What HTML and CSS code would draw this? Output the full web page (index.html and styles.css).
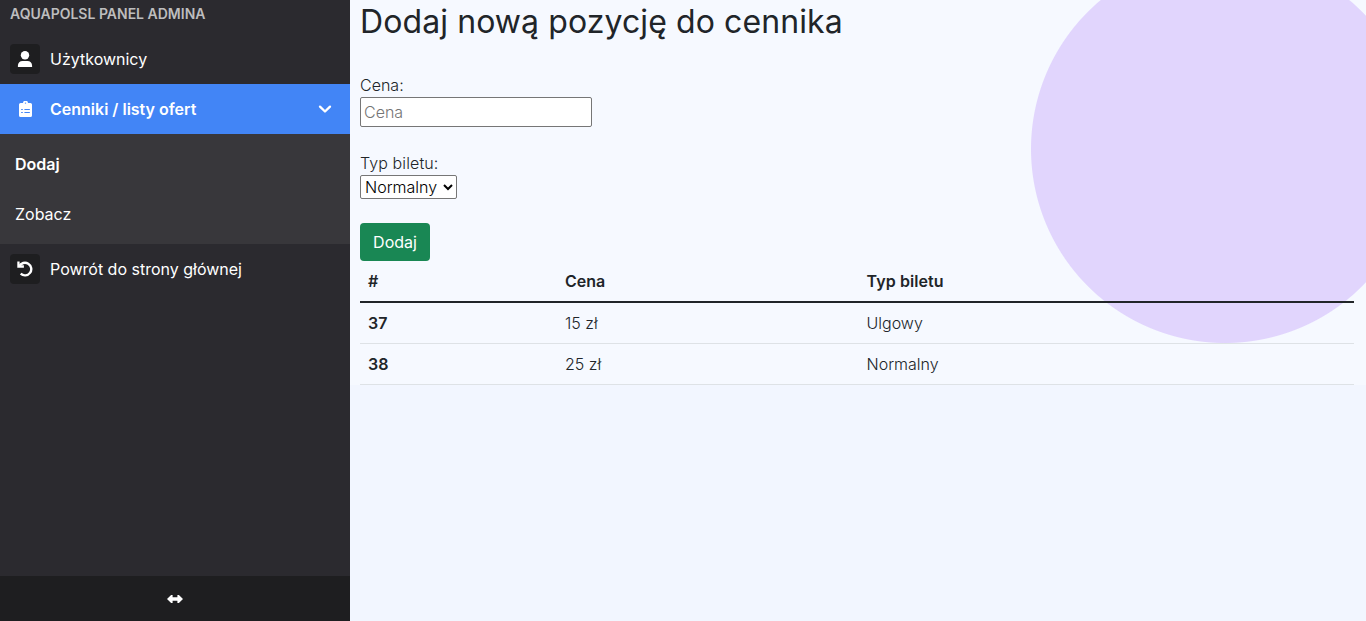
FILE: index.html
```
<!DOCTYPE html>
<html lang="pl">
<head>
<meta charset="utf-8">
<title>Panel admina</title>
<link rel="stylesheet" href="styles.css">
</head>
<body>
<aside class="sidebar">
  <h5 class="brand">AQUAPOLSL PANEL ADMINA</h5>
  <a class="item"><span class="icon"><svg width="16" height="16" viewBox="0 0 16 16"><circle cx="8" cy="4.2" r="4.2"/><path d="M.9 16v-1.2c0-3 2-4.900 4.600-4.900h5c2.600 0 4.600 1.900 4.600 4.900V16z"/></svg></span><span>Użytkownicy</span></a>
  <a class="item active"><span class="icon"><svg width="13" height="16" viewBox="0 0 12 16" preserveAspectRatio="none"><path fill-rule="evenodd" d="M3.700 2a2.300 2.300 0 0 1 4.600 0h2.200A1.500 1.500 0 0 1 12 3.500v11a1.500 1.500 0 0 1-1.500 1.500h-9A1.500 1.500 0 0 1 0 14.500v-11A1.500 1.500 0 0 1 1.500 2zM6 1.400a.7.7 0 1 0 0 1.400.7.7 0 0 0 0-1.400zM2 8v1h1.500V8zm3 0v1h5V8zm-3 3v1h1.500v-1zm3 0v1h5v-1z"/></svg></span><span>Cenniki / listy ofert</span><svg class="chevron" width="14" height="16" viewBox="0 0 14 16"><path d="M2 5.600l5 4.900 5-4.900"/></svg></a>
  <nav class="submenu">
    <a class="current">Dodaj</a>
    <a>Zobacz</a>
  </nav>
  <a class="item"><span class="icon"><svg width="16" height="16" viewBox="0 0 16 16"><path class="stroke" d="M2.300 5.300A6.300 6.300 0 1 1 3.700 12.700"/><path d="M.3.500h2.300v3.700h4.300v2.600H.3z"/></svg></span><span>Powrót do strony głównej</span></a>
  <button class="resize" aria-label="Zmień szerokość"><svg width="16" height="16" viewBox="0 0 16 16"><path d="M0 8l4.100-4.100h1.500v2.400h4.800V3.900h1.500L16 8l-4.100 4.100h-1.500V9.700H5.600v2.400H4.100z"/></svg></button>
</aside>
<main class="content">
  <h2>Dodaj nową pozycję do cennika</h2>
  <form>
    <label for="price">Cena:</label>
    <input id="price" type="text" placeholder="Cena">
    <label class="spaced" for="type">Typ biletu:</label>
    <select id="type"><option>Normalny</option><option>Ulgowy</option></select>
    <button class="submit" type="button">Dodaj</button>
  </form>
  <table>
    <colgroup><col class="col-id"><col class="col-price"><col></colgroup>
    <thead><tr><th>#</th><th>Cena</th><th class="spaced">Typ biletu</th></tr></thead>
    <tbody>
      <tr><th>37</th><td>15 zł</td><td>Ulgowy</td></tr>
      <tr><th>38</th><td>25 zł</td><td>Normalny</td></tr>
    </tbody>
  </table>
</main>
</body>
</html>
```
FILE: styles.css
```
* { box-sizing: border-box; }
body {
  margin: 0;
  display: flex;
  align-items: flex-start;
  height: 621px;
  overflow: hidden;
  background: #f2f6ff;
  color: #212529;
  font: 300 16px/24px Inter, "Liberation Sans", sans-serif;
}
.sidebar {
  display: flex;
  flex-direction: column;
  width: 350px;
  height: 621px;
  background: #2b2a2f;
  color: #fff;
  font-weight: 400;
}
.brand {
  margin: 0;
  padding: 5px 10px 12px;
  font-size: 14px;
  line-height: 17px;
  font-weight: 600;
  color: #bdbdbe;
}
.item {
  display: flex;
  align-items: center;
  gap: 10px;
  height: 50px;
  padding: 0 10px;
}
.active { background: #4285f6; font-weight: 600; }
.icon {
  display: flex;
  align-items: center;
  justify-content: center;
  width: 30px;
  height: 30px;
  border-radius: 4px;
  background: #1e1e20;
}
.active .icon { background: none; }
svg { fill: #fff; }
.stroke { fill: none; stroke: #fff; stroke-width: 2.4; }
.chevron { margin: 0 8px 0 auto; fill: none; stroke: #fff; stroke-width: 2.3; stroke-linecap: round; stroke-linejoin: round; }
.submenu {
  height: 110px;
  padding: 5px 15px;
  background: #38373b;
  line-height: 50px;
}
.submenu a { display: block; }
.current { font-weight: 600; }
.spaced { letter-spacing: .1px; }
.resize {
  display: flex;
  align-items: center;
  justify-content: center;
  height: 45px;
  margin-top: auto;
  padding: 0;
  border: 0;
  background: #1e1e20;
}
.content {
  flex: 1;
  height: 385px;
  padding: 3px 12px 0 10px;
  background: radial-gradient(circle at 875px 149px, #e1d5fd 193.500px, transparent 194.500px) #f6f9ff;
}
h2 {
  margin: 0 0 32px;
  font-size: 32px;
  line-height: 38px;
  font-weight: 400;
  letter-spacing: .09px;
}
form { display: flex; flex-direction: column; align-items: flex-start; }
input, select {
  margin: 0 0 24px;
  border: 1px solid #767676;
  border-radius: 2px;
  background: #fff;
  font: inherit;
}
input { width: 232px; height: 30px; padding: 1px 3px; }
input::placeholder { color: #757575; }
select { width: 97px; height: 24px; padding: 0; color: #000; }
.submit {
  width: 70px;
  height: 38px;
  padding: 0;
  border: 0;
  border-radius: 4px;
  background: #198754;
  color: #fff;
  font: 400 16px/24px Inter, "Liberation Sans", sans-serif;
}
table { width: 994px; border-collapse: collapse; table-layout: fixed; }
.col-id { width: 197px; }
.col-price { width: 301.500px; }
th, td { height: 41px; padding: 8px; text-align: left; border-bottom: 1px solid #dee2e6; }
th { font-weight: 600; }
thead th { border-bottom: 2px solid #212529; }
```
